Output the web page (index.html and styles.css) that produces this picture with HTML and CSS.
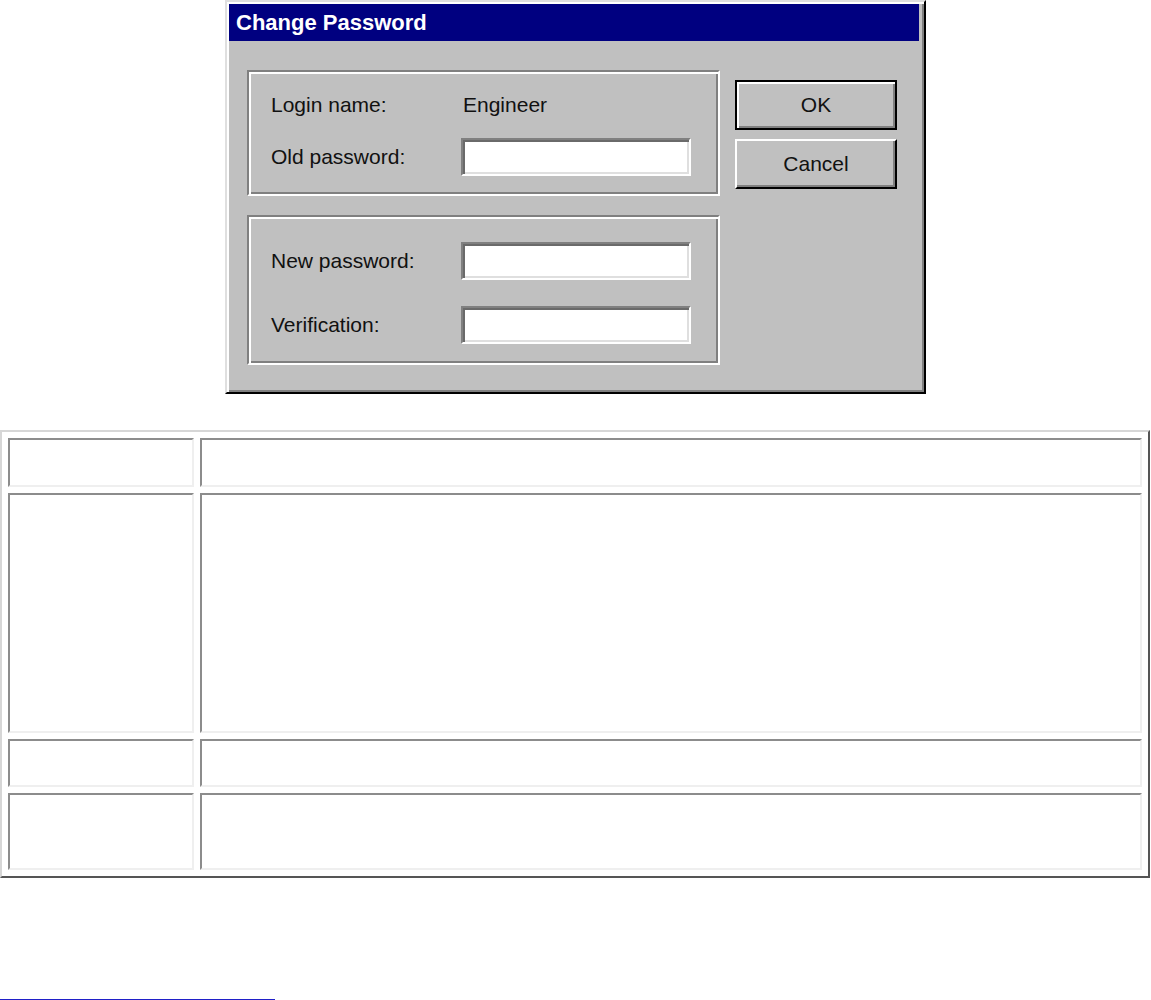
FILE: index.html
```html
<!DOCTYPE html>
<html lang="en">
<head>
  <meta charset="UTF-8" />
  <title>Change Password</title>
  <link rel="stylesheet" href="styles.css">
</head>
<body>
  <div class="dialog">
    <div class="titlebar">Change Password</div>
    <div class="dialog-body">
      <div class="groups">
        <div class="group group-login">
          <div class="row row-text">
            <span class="label">Login name:</span>
            <span class="value">Engineer</span>
          </div>
          <div class="row">
            <span class="label">Old password:</span>
            <span class="field"></span>
          </div>
        </div>
        <div class="group group-new">
          <div class="row">
            <span class="label">New password:</span>
            <span class="field"></span>
          </div>
          <div class="row">
            <span class="label">Verification:</span>
            <span class="field"></span>
          </div>
        </div>
      </div>
      <div class="buttons">
        <div class="btn btn-default"><span>OK</span></div>
        <div class="btn"><span>Cancel</span></div>
      </div>
    </div>
  </div>

  <table class="fields">
    <tr class="r1"><td class="c1"></td><td></td></tr>
    <tr class="r2"><td class="c1"></td><td></td></tr>
    <tr class="r3"><td class="c1"></td><td></td></tr>
    <tr class="r4"><td class="c1"></td><td></td></tr>
  </table>

  <div class="footnote-rule"></div>
</body>
</html>
```

FILE: styles.css
```css
body {
  margin: 0;
  background: #fff;
  font-family: "Liberation Sans", Arial, sans-serif;
}

/* dialog box */
.dialog {
  box-sizing: border-box;
  width: 701px;
  height: 394px;
  margin: 0 auto;
  background: #c0c0c0;
  border: 2px solid;
  border-color: #dfdfdf #000 #000 #dfdfdf;
  box-shadow: inset 2px 2px #fff, inset -2px -2px #808080;
  padding: 2px 5px 0 2px;
  color: #111;
}
.titlebar {
  height: 37px;
  background: #000080;
  color: #fff;
  font-weight: bold;
  font-size: 22px;
  line-height: 37px;
  padding-left: 7px;
}
.dialog-body {
  display: flex;
  padding-left: 18px;
}
.groups {
  width: 473px;
  margin-top: 29px;
}
.group {
  box-sizing: border-box;
  border: 2px solid;
  border-color: #808080 #fff #fff #808080;
  box-shadow: inset 2px 2px #fff, inset -2px -2px #808080;
  padding-left: 22px;
}
.group-login {
  height: 126px;
  padding-top: 21px;
}
.group-new {
  height: 150px;
  margin-top: 19px;
  padding-top: 25px;
}
.row {
  display: flex;
  align-items: center;
  font-size: 21px;
}
.row-text {
  height: 24px;
  margin-bottom: 21px;
}
.group-new .row + .row {
  margin-top: 26px;
}
.label {
  width: 190px;
}
.value {
  margin-left: 2px;
}
.field {
  box-sizing: border-box;
  width: 230px;
  height: 38px;
  background: #fff;
  border: 2px solid;
  border-color: #808080 #fff #fff #808080;
  box-shadow: inset 2px 2px #6a6a6a, inset -2px -2px #dfdfdf;
}

/* push buttons */
.buttons {
  margin-left: 15px;
  margin-top: 39px;
  width: 162px;
}
.btn {
  box-sizing: border-box;
  height: 50px;
  margin-bottom: 9px;
  border: 2px solid;
  border-color: #fff #000 #000 #fff;
  box-shadow: inset -2px -2px #808080;
  display: flex;
  align-items: center;
  justify-content: center;
  font-size: 21px;
}
.btn-default {
  border-color: #000;
  box-shadow: inset 2px 2px #fff, inset -2px -2px #808080;
}

/* empty field table */
.fields {
  width: 1150px;
  margin-top: 36px;
  border-collapse: separate;
  border-spacing: 6px;
  border: 2px solid;
  border-color: #d6d6d6 #555 #555 #d6d6d6;
  table-layout: fixed;
}
.fields td {
  padding: 0;
  border: 2px solid;
  border-color: #8c8c8c #efefef #efefef #8c8c8c;
}
.fields td.c1 {
  width: 182px;
}
.r1 td { height: 45px; }
.r2 td { height: 236px; }
.r3 td { height: 44px; }
.r4 td { height: 73px; }

.footnote-rule {
  width: 275px;
  height: 0;
  margin-top: 121px;
  border-top: 2px solid #2020c8;
}
```
